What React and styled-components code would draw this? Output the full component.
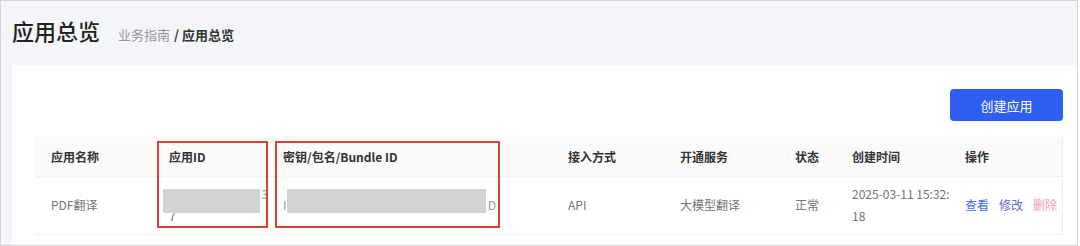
import React from "react";
import styled, { createGlobalStyle } from "styled-components";

const Global = createGlobalStyle`
  html, body { margin: 0; padding: 0; background: #ffffff; }
  body { font-family: "Noto Sans CJK SC", "Noto Sans", sans-serif; }
  * { box-sizing: border-box; }
`;

const Frame = styled.div`
  width: 1078px;
  height: 246px;
  border: 1px solid #d6d6da;
  background: #f4f5f8;
  display: flex;
  flex-direction: column;
  overflow: hidden;
`;

const Header = styled.div`
  height: 64px;
  flex: none;
  display: flex;
  align-items: baseline;
  gap: 18px;
  padding: 14px 0 0 11px;
`;

const Title = styled.h1`
  margin: 0;
  font-size: 22px;
  font-weight: 500;
  color: #222;
  line-height: 30px;
`;

const Crumbs = styled.div`
  font-size: 13px;
  color: #999;
  display: flex;
  gap: 4px;
`;

const Current = styled.span`
  color: #333;
  font-weight: 600;
`;

const Card = styled.div`
  flex: 1;
  margin-left: 11px;
  background: #fff;
  padding: 24px 14px 0 23px;
`;

const Toolbar = styled.div`
  display: flex;
  justify-content: flex-end;
`;

const PrimaryButton = styled.button`
  width: 113px;
  height: 32px;
  border: none;
  border-radius: 4px;
  background: #2f5ff0;
  color: #fff;
  font-family: inherit;
  font-size: 13px;
  cursor: pointer;
`;

const TableWrap = styled.div`
  position: relative;
  margin-top: 16px;
`;

const Table = styled.table`
  width: 1027px;
  border-collapse: collapse;
  table-layout: fixed;
  font-size: 12px;
  border-right: 1px solid #eeeeee;
`;

const Th = styled.th`
  height: 39px;
  background: #fafafa;
  color: #333;
  font-weight: 600;
  text-align: left;
  padding: 0 0 0 16px;
  border-bottom: 1px solid #f0f0f0;
`;

const Td = styled.td`
  height: 58px;
  color: #737373;
  padding: 0 0 0 16px;
  line-height: 22px;
  border-bottom: 1px solid #eeeeee;
  vertical-align: middle;
  white-space: nowrap;
`;

const Line = styled.div`
  line-height: 22px;
`;

const Fragmented = styled.div`
  width: ${(p) => p.$w}px;
  display: flex;
  justify-content: space-between;
  line-height: 22px;
  color: #9a9a9a;
`;

const Actions = styled.div`
  display: flex;
  gap: 10px;
`;

const ActionLink = styled.a`
  color: ${(p) => p.$color};
  cursor: pointer;
`;

const Highlight = styled.div`
  position: absolute;
  top: 4px;
  left: ${(p) => p.$left}px;
  width: ${(p) => p.$width}px;
  height: 87px;
  border: 2px solid #d8452f;
  pointer-events: none;
`;

const Redaction = styled.div`
  position: absolute;
  top: 52px;
  left: ${(p) => p.$left}px;
  width: ${(p) => p.$width}px;
  height: 24px;
  background: #d3d3d3;
`;

const columns = [
  ["name", "应用名称", 118],
  ["id", "应用ID", 114],
  ["key", "密钥/包名/Bundle ID", 285],
  ["access", "接入方式", 112],
  ["service", "开通服务", 115],
  ["status", "状态", 57],
  ["created", "创建时间", 113],
  ["ops", "操作", 113],
];

export default function App() {
  return (
    <>
      <Global />
      <Frame>
        <Header>
          <Title>应用总览</Title>
          <Crumbs>
            <span>业务指南</span>
            <Current>/ 应用总览</Current>
          </Crumbs>
        </Header>
        <Card>
          <Toolbar>
            <PrimaryButton>创建应用</PrimaryButton>
          </Toolbar>
          <TableWrap>
            <Table>
              <colgroup>
                {columns.map(([k, , w]) => (
                  <col key={k} style={{ width: w }} />
                ))}
              </colgroup>
              <thead>
                <tr>
                  {columns.map(([k, label]) => (
                    <Th key={k}>{label}</Th>
                  ))}
                </tr>
              </thead>
              <tbody>
                <tr>
                  <Td>PDF翻译</Td>
                  <Td>
                    <Fragmented $w={99}>
                      <span />
                      <span>3</span>
                    </Fragmented>
                    <Line>7</Line>
                  </Td>
                  <Td>
                    <Fragmented $w={213}>
                      <span>Ic</span>
                      <span>D</span>
                    </Fragmented>
                  </Td>
                  <Td>API</Td>
                  <Td>大模型翻译</Td>
                  <Td>正常</Td>
                  <Td>
                    <Line>2025-03-11 15:32:</Line>
                    <Line>18</Line>
                  </Td>
                  <Td>
                    <Actions>
                      <ActionLink $color="#4169ef">查看</ActionLink>
                      <ActionLink $color="#5a6fd8">修改</ActionLink>
                      <ActionLink $color="#f29ab6">删除</ActionLink>
                    </Actions>
                  </Td>
                </tr>
              </tbody>
            </Table>
            <Redaction $left={128} $width={97} />
            <Redaction $left={252} $width={199} />
            <Highlight $left={122} $width={111} />
            <Highlight $left={240} $width={225} />
          </TableWrap>
        </Card>
      </Frame>
    </>
  );
}
